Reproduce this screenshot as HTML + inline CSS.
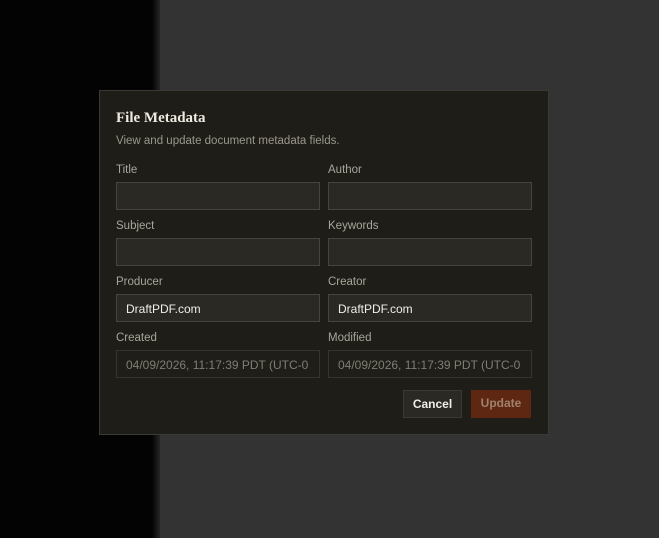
<!DOCTYPE html>
<html><head><style>
*{box-sizing:border-box;margin:0;padding:0}
body{width:659px;height:538px;overflow:hidden;background:#333333;position:relative;font-family:"Liberation Sans","DejaVu Sans",sans-serif}
.left{position:absolute;left:0;top:0;width:156px;height:538px;background:#030303}
.leftedge{position:absolute;left:152px;top:0;width:8px;height:538px;background:linear-gradient(90deg,#030303,#262626)}
.dlg{position:absolute;left:99px;top:90px;width:450px;height:345px;background:#1e1d17;border:1px solid #3a3933}
h1{position:absolute;left:16px;top:19px;font-family:"Liberation Serif","DejaVu Serif",serif;font-size:15px;font-weight:bold;color:#eeeae0}
.sub{position:absolute;left:16px;top:44px;font-size:11.5px;color:#9a978d}
.lbl{position:absolute;font-size:11.5px;color:#a8a59b}
.inp{position:absolute;width:204px;height:28px;background:#2a2923;border:1px solid #45443d;font-size:12px;color:#f0eee8;padding:7px 0 0 9px;white-space:nowrap;overflow:hidden}
.dis{background:#1f1e19;border-color:#35342e;color:#807d74;padding-left:9px}
.btn{position:absolute;top:299px;height:28px;font-size:12px;font-weight:bold;text-align:center;line-height:27px}
</style></head><body>
<div class="left"></div><div class="leftedge"></div>
<div class="dlg">
<h1>File Metadata</h1>
<div class="sub">View and update document metadata fields.</div>
<div class="lbl" style="left:16px;top:73px">Title</div><div class="lbl" style="left:228px;top:73px">Author</div>
<div class="inp" style="left:16px;top:91px"></div><div class="inp" style="left:228px;top:91px"></div>
<div class="lbl" style="left:16px;top:129px">Subject</div><div class="lbl" style="left:228px;top:129px">Keywords</div>
<div class="inp" style="left:16px;top:147px"></div><div class="inp" style="left:228px;top:147px"></div>
<div class="lbl" style="left:16px;top:185px">Producer</div><div class="lbl" style="left:228px;top:185px">Creator</div>
<div class="inp" style="left:16px;top:203px">DraftPDF.com</div><div class="inp" style="left:228px;top:203px">DraftPDF.com</div>
<div class="lbl" style="left:16px;top:241px">Created</div><div class="lbl" style="left:228px;top:241px">Modified</div>
<div class="inp dis" style="left:16px;top:259px">04/09/2026, 11:17:39 PDT (UTC-0</div><div class="inp dis" style="left:228px;top:259px">04/09/2026, 11:17:39 PDT (UTC-0</div>
<div class="btn" style="left:303px;width:59px;background:#2a2923;border:1px solid #3a3933;color:#f0eee8">Cancel</div>
<div class="btn" style="left:371px;width:60px;background:#5e2711;color:#a0806f">Update</div>
</div>
</body></html>
